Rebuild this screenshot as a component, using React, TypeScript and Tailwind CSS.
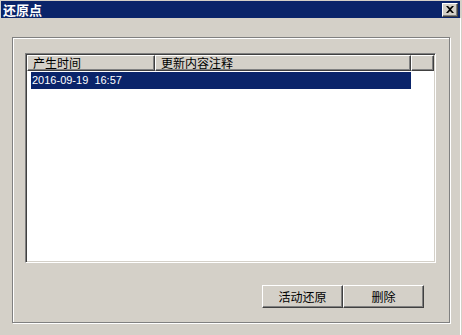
const cjk = { fontFamily: '"Noto Sans CJK SC", "Liberation Sans", sans-serif' }
const raised =
  'border border-t-white border-l-white border-b-[#404040] border-r-[#404040] shadow-[inset_-1px_-1px_0_#808080]'

function Btn({ label }: { label: string }) {
  return (
    <button
      className={`w-[81px] h-[23px] bg-[#d4d0c8] text-[12px] leading-none text-black flex items-center justify-center ${raised}`}
      style={cjk}
    >
      {label}
    </button>
  )
}

export default function App() {
  return (
    <div className="w-[462px] h-[335px] bg-[#d4d0c8] pt-px pl-px pr-px flex flex-col overflow-hidden" style={cjk}>
      <div className="h-[17px] mr-px bg-[#0a246a] flex items-center justify-between pl-[2px] pr-[2px]">
        <span className="text-white font-bold text-[13px] leading-none">还原点</span>
        <div className={`w-[16px] h-[14px] bg-[#d4d0c8] flex items-center justify-center ${raised}`}>
          <svg width="8" height="7" viewBox="0 0 8 7">
            <path d="M0 0h2l2 2 2-2h2L5 3.5 8 7H6L4 5 2 7H0l3-3.5z" fill="#000" />
          </svg>
        </div>
      </div>
      <div className="flex-1 border-r border-white">
        <div className="ml-[11px] mt-[19px] w-[438px] h-[286px] border border-[#808080] shadow-[inset_1px_1px_0_#fff,1px_1px_0_#fff] flex flex-col">
          <div className="ml-[12px] mt-[15px] w-[411px] h-[210px] bg-white border border-t-[#808080] border-l-[#808080] border-b-white border-r-white shadow-[inset_1px_1px_0_#404040,inset_-1px_-1px_0_#d4d0c8] p-px flex flex-col">
            <div className="flex h-[16px] text-[12px] leading-none text-black">
              <div className={`w-[128px] bg-[#d4d0c8] flex items-center pl-[5px] ${raised}`}>产生时间</div>
              <div className={`w-[256px] bg-[#d4d0c8] flex items-center pl-[5px] ${raised}`}>更新内容注释</div>
              <div className={`flex-1 bg-[#d4d0c8] ${raised}`} />
            </div>
            <div className="mt-px flex h-[17px]">
              <div
                className="ml-[4px] w-[380px] bg-[#0a246a] text-white text-[11px] leading-none flex items-center pl-[1px] whitespace-pre"
                style={{ fontFamily: '"Liberation Sans", sans-serif' }}
              >
                2016-09-19  16:57
              </div>
            </div>
          </div>
          <div className="mt-[22px] ml-[249px] flex">
            <Btn label="活动还原" />
            <Btn label="删除" />
          </div>
        </div>
      </div>
    </div>
  )
}
